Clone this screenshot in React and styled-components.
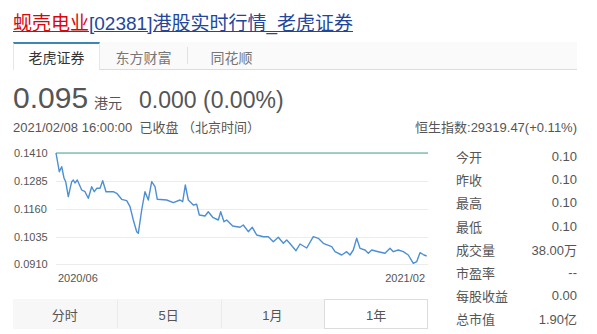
import React from 'react';
import styled, { createGlobalStyle } from 'styled-components';

const GlobalStyle = createGlobalStyle`
  body {
    margin: 0;
    background: #fff;
    font-family: 'Liberation Sans', 'Noto Sans CJK SC', sans-serif;
    color: #555;
  }
`

const Page = styled.div`
  width: 564px;
  padding: 12px 0 0 13px;
`
const Title = styled.div`
  font-size: 19px;
  line-height: 24px;
  margin-bottom: 6px;
  white-space: nowrap;
`
const TitleLink = styled.a`
  color: ${props => props.red ? '#d8070d' : '#23469c'};
  text-decoration: underline;
`
const TabBar = styled.div`
  display: flex;
  height: 27px;
  background: #fafafa;
  border-bottom: 1px solid #dcdcdc;
`
const Tab = styled.div`
  width: 87px;
  box-sizing: border-box;
  display: flex;
  align-items: center;
  justify-content: center;
  font-size: 14px;
  color: ${props => props.active ? '#333' : '#777'};
  background: ${props => props.active ? '#fff' : 'transparent'};
  border-top: 2px solid ${props => props.active ? '#3a86b4' : 'transparent'};
  border-left: 1px solid ${props => props.active ? '#e6e6e6' : 'transparent'};
  border-right: 1px solid ${props => props.active ? '#e6e6e6' : 'transparent'};
  height: ${props => props.active ? '28px' : '27px'};
`
const TabSep = styled.div`
  width: 1px;
  height: 17px;
  margin-top: 5px;
  background: #e2e2e2;
`
const PriceRow = styled.div`
  display: flex;
  align-items: baseline;
  margin-top: 12px;
  height: 32px;
  white-space: nowrap;
`
const Price = styled.span`
  font-size: 30px;
  line-height: 32px;
  color: #555;
`
const Unit = styled.span`
  font-size: 14px;
  margin-left: 6px;
  color: #555;
`
const Change = styled.span`
  font-size: 23px;
  margin-left: 17px;
  color: #555;
`
const InfoRow = styled.div`
  display: flex;
  justify-content: space-between;
  font-size: 13px;
  line-height: 18px;
  margin-top: 5px;
  color: #555;
  white-space: nowrap;
`
const Main = styled.div`
  display: flex;
  margin-top: 8px;
`
const ChartCol = styled.div`
  width: 415px;
`
const RangeTabs = styled.div`
  display: flex;
  margin-top: 9px;
  height: 30px;
  background: #f7f7f7;
`
const RangeTab = styled.div`
  flex: 1;
  display: flex;
  align-items: center;
  justify-content: center;
  font-size: 13px;
  color: #555;
  box-sizing: border-box;
  background: ${props => props.active ? '#fff' : 'transparent'};
  border: 1px solid ${props => props.active ? '#dcdcdc' : 'transparent'};
  border-left: 1px solid ${props => props.active ? '#dcdcdc' : (props.first ? 'transparent' : '#ebebeb')};
`
const Stats = styled.div`
  width: 121px;
  margin-left: 28px;
`
const StatRow = styled.div`
  display: flex;
  justify-content: space-between;
  height: 23.2px;
  align-items: center;
  font-size: 13px;
  color: #555;
`

const gridYs = [8, 36, 64, 92, 119]
const labels = ['0.1410', '0.1285', '0.1160', '0.1035', '0.0910']

const pts = [
  [56, 153], [59.3, 171.7], [61.7, 166.7], [64, 178], [65.7, 181.7], [68.3, 196.7], [71.7, 181.7],
  [73.3, 180], [75, 183], [77.3, 180], [81.7, 190], [85, 191.7], [88.3, 198.3], [91.7, 186.7],
  [94.3, 191.7], [96.7, 188.3], [100, 188.3], [102.7, 180.7], [106, 191.7], [113.3, 191.7],
  [116.7, 193.3], [121.7, 199.3], [126.7, 200.7], [130, 206.7], [133.3, 220], [136.7, 231.7],
  [138.3, 233.3], [141.7, 210], [145, 191.7], [148.3, 200], [151.7, 181.7], [155, 186.7],
  [157.3, 199.3], [166.7, 200], [173.3, 202.7], [180, 200], [182.7, 201.7], [185.3, 185],
  [188.3, 200], [193.3, 205], [196.7, 204.3], [199.3, 215], [205, 216], [208.3, 211.7],
  [212.7, 217.3], [218.3, 220], [220.7, 211.7], [224, 221.7], [226.7, 220], [232.7, 226],
  [240, 227.3], [243.3, 225], [248.3, 231.7], [252.3, 227.3], [256.7, 235], [263.3, 236.7],
  [268.3, 236.7], [273.3, 241.7], [278.3, 237.3], [283.3, 243.3], [286.7, 240], [289.3, 242.7],
  [296, 250.7], [300, 244], [306.7, 248], [313.3, 236.7], [318.3, 238.3], [323.3, 243.3],
  [331.7, 246.7], [335, 251.7], [341.7, 255], [346.7, 251.7], [350, 255], [353.3, 250],
  [356.7, 238.3], [360, 248.3], [365, 250], [368.3, 253.3], [371.7, 250], [378.3, 251.7],
  [385, 253.3], [390, 248.3], [393.3, 251.7], [398.3, 250], [403.3, 251.7], [408.3, 255],
  [413.3, 263.3], [416.7, 261.7], [420, 252.7], [424, 255], [426.7, 256],
]

const Chart = () => (
  <svg width="415" height="145" style={{ display: 'block' }}>
    {gridYs.map((y, i) => (
      <g key={i}>
        <line x1="43" x2="415" y1={y + 0.5} y2={y + 0.5} stroke="#ececec" strokeWidth="1" />
        <text x="1" y={y + 4} fontSize="11" fill="#555" fontFamily="Liberation Sans, sans-serif">{labels[i]}</text>
      </g>
    ))}
    <line x1="43" x2="415" y1="8" y2="8" stroke="#4aa48c" strokeWidth="1.2" />
    <polyline
      points={pts.map(([x, y]) => `${x - 13},${y - 145}`).join(' ')}
      fill="none"
      stroke="#4d8fd4"
      strokeWidth="1.4"
      strokeLinejoin="round"
    />
    <text x="45" y="137" fontSize="11" fill="#555" fontFamily="Liberation Sans, sans-serif">2020/06</text>
    <text x="412" y="137" fontSize="11" fill="#555" textAnchor="end" fontFamily="Liberation Sans, sans-serif">2021/02</text>
  </svg>
)

const stats = [
  ['今开', '0.10'], ['昨收', '0.10'], ['最高', '0.10'], ['最低', '0.10'],
  ['成交量', '38.00万'], ['市盈率', '--'], ['每股收益', '0.00'], ['总市值', '1.90亿'],
]

const App = () => (
  <Page>
    <GlobalStyle />
    <Title>
      <TitleLink red>蚬壳电业</TitleLink>
      <TitleLink>[02381]港股实时行情_老虎证券</TitleLink>
    </Title>
    <TabBar>
      <Tab active>老虎证券</Tab>
      <Tab>东方财富</Tab>
      <TabSep />
      <Tab>同花顺</Tab>
    </TabBar>
    <PriceRow>
      <Price>0.095</Price>
      <Unit>港元</Unit>
      <Change>0.000 (0.00%)</Change>
    </PriceRow>
    <InfoRow>
      <span>2021/02/08 16:00:00&nbsp;&nbsp;已收盘 （北京时间）</span>
      <span>恒生指数:29319.47(+0.11%)</span>
    </InfoRow>
    <Main>
      <ChartCol>
        <Chart />
        <RangeTabs>
          <RangeTab first>分时</RangeTab>
          <RangeTab>5日</RangeTab>
          <RangeTab>1月</RangeTab>
          <RangeTab active>1年</RangeTab>
        </RangeTabs>
      </ChartCol>
      <Stats>
        {stats.map(([k, v]) => (
          <StatRow key={k}>
            <span>{k}</span>
            <span>{v}</span>
          </StatRow>
        ))}
      </Stats>
    </Main>
  </Page>
)

export default App;
